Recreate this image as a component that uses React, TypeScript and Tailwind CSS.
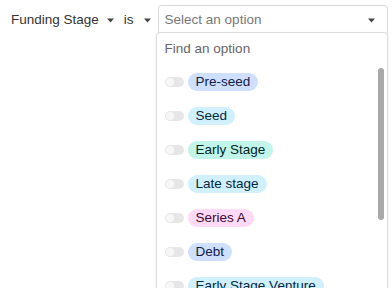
const options = [
  { label: "Pre-seed", bg: "bg-[#cfdfff]", fg: "text-[#102046]" },
  { label: "Seed", bg: "bg-[#d0f0fd]", fg: "text-[#04283f]" },
  { label: "Early Stage", bg: "bg-[#c2f5e9]", fg: "text-[#012524]" },
  { label: "Late stage", bg: "bg-[#d0f0fd]", fg: "text-[#04283f]" },
  { label: "Series A", bg: "bg-[#ffdaf6]", fg: "text-[#400832]" },
  { label: "Debt", bg: "bg-[#cfdfff]", fg: "text-[#102046]" },
  { label: "Early Stage Venture", bg: "bg-[#d0f0fd]", fg: "text-[#04283f]" },
];

const Caret = ({ className = "" }: { className?: string }) => (
  <svg width="7" height="5" viewBox="0 0 7 5" className={className}>
    <path d="M0 0.5 L7 0.5 L3.5 4.5 Z" fill="currentColor" />
  </svg>
);

export default function App() {
  return (
    <div
      className="h-[288px] w-[392px] overflow-hidden bg-white text-[13.5px] text-[#333]"
      style={{ fontFamily: '"Liberation Sans", Arial, sans-serif' }}
    >
      <div className="flex items-start pt-[5px] pl-[11px]">
        <div className="flex h-[30px] items-center">
          <span>Funding Stage</span>
          <Caret className="ml-[8px] text-[#444]" />
          <span className="ml-[10px]">is</span>
          <Caret className="ml-[10px] text-[#444]" />
        </div>
        <div className="ml-[7px] flex flex-col">
          <div className="flex h-[30px] w-[230px] items-center justify-between rounded-[3px] border border-[#d9d9d9] pl-[6px] pr-[12px] text-[#777]">
            <span>Select an option</span>
            <Caret className="text-[#444]" />
          </div>
          <div className="relative -mt-[3px] -ml-[2px] h-[300px] w-[232px] rounded-[4px] border border-[#dcdcdc] bg-white shadow-[0_1px_3px_rgba(0,0,0,0.08)]">
            <div className="flex h-[32px] items-center pl-[8px] text-[#666]">
              Find an option
            </div>
            {options.map((o) => (
              <div key={o.label} className="flex h-[34px] items-center pl-[8px]">
                <div className="flex h-[10px] w-[19px] items-center rounded-full bg-[#e6e6e6] pl-[1px]">
                  <div className="h-[8px] w-[8px] rounded-full bg-[#f7f7f7]" />
                </div>
                <span
                  className={`ml-[4px] flex h-[18px] items-center rounded-full px-[8px] ${o.bg} ${o.fg}`}
                >
                  {o.label}
                </span>
              </div>
            ))}
            <div className="absolute left-[221px] top-[35px] h-[152px] w-[6px] rounded-full bg-[#a9a9a9]" />
          </div>
        </div>
      </div>
    </div>
  );
}
